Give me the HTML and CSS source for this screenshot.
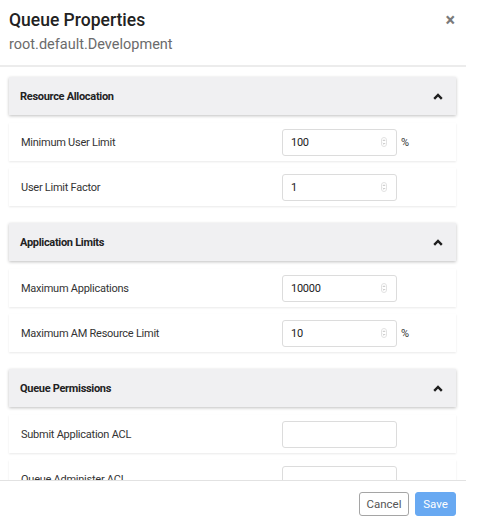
FILE: index.html
```html
<!DOCTYPE html>
<html>
<head>
<meta charset="utf-8">
<link rel="stylesheet" href="styles.css">
</head>
<body>
<div class="modal">
  <div class="modal-header">
    <div class="titles">
      <div class="title">Queue Properties</div>
      <div class="subtitle">root.default.Development</div>
    </div>
    <div class="close">&times;</div>
  </div>
  <div class="modal-body">
    <div class="section">
      <div class="section-head"><span>Resource Allocation</span><svg class="chev" width="10" height="7" viewBox="0 0 10 7"><path d="M1.2 5.8 L5 2 L8.8 5.8" fill="none" stroke="#1e1e1e" stroke-width="2.4"/></svg></div>
      <div class="row"><span class="label">Minimum User Limit</span><div class="input"><span>100</span><svg class="spin" width="6" height="10" viewBox="0 0 6 10"><rect x="0.5" y="0.5" width="5" height="9" rx="2.5" fill="none" stroke="#e2e2e2"/><path d="M1.8 4 L3 2.8 L4.2 4 M1.8 6 L3 7.2 L4.2 6" fill="none" stroke="#b5b5b5" stroke-width="0.8"/></svg></div><span class="unit">%</span></div>
      <div class="row"><span class="label">User Limit Factor</span><div class="input"><span>1</span><svg class="spin" width="6" height="10" viewBox="0 0 6 10"><rect x="0.5" y="0.5" width="5" height="9" rx="2.5" fill="none" stroke="#e2e2e2"/><path d="M1.8 4 L3 2.8 L4.2 4 M1.8 6 L3 7.2 L4.2 6" fill="none" stroke="#b5b5b5" stroke-width="0.8"/></svg></div></div>
    </div>
    <div class="section">
      <div class="section-head"><span>Application Limits</span><svg class="chev" width="10" height="7" viewBox="0 0 10 7"><path d="M1.2 5.8 L5 2 L8.8 5.8" fill="none" stroke="#1e1e1e" stroke-width="2.4"/></svg></div>
      <div class="row"><span class="label">Maximum Applications</span><div class="input"><span>10000</span><svg class="spin" width="6" height="10" viewBox="0 0 6 10"><rect x="0.5" y="0.5" width="5" height="9" rx="2.5" fill="none" stroke="#e2e2e2"/><path d="M1.8 4 L3 2.8 L4.2 4 M1.8 6 L3 7.2 L4.2 6" fill="none" stroke="#b5b5b5" stroke-width="0.8"/></svg></div></div>
      <div class="row"><span class="label">Maximum AM Resource Limit</span><div class="input"><span>10</span><svg class="spin" width="6" height="10" viewBox="0 0 6 10"><rect x="0.5" y="0.5" width="5" height="9" rx="2.5" fill="none" stroke="#e2e2e2"/><path d="M1.8 4 L3 2.8 L4.2 4 M1.8 6 L3 7.2 L4.2 6" fill="none" stroke="#b5b5b5" stroke-width="0.8"/></svg></div><span class="unit">%</span></div>
    </div>
    <div class="section">
      <div class="section-head"><span>Queue Permissions</span><svg class="chev" width="10" height="7" viewBox="0 0 10 7"><path d="M1.2 5.8 L5 2 L8.8 5.8" fill="none" stroke="#1e1e1e" stroke-width="2.4"/></svg></div>
      <div class="row"><span class="label">Submit Application ACL</span><div class="input"></div></div>
      <div class="row"><span class="label">Queue Administer ACL</span><div class="input"></div></div>
    </div>
  </div>
  <div class="modal-footer">
    <button class="btn cancel">Cancel</button>
    <button class="btn save">Save</button>
  </div>
</div>
</body>
</html>
```
FILE: styles.css
```css
html, body {
  margin: 0;
  padding: 0;
  background: #fff;
}
body {
  font-family: Roboto, "Liberation Sans", sans-serif;
  color: #333;
  width: 477px;
  height: 531px;
  overflow: hidden;
}
.modal {
  width: 466px;
  height: 531px;
  display: flex;
  flex-direction: column;
}
.modal-header {
  height: 67px;
  box-sizing: border-box;
  border-bottom: 2px solid #ececec;
  padding: 9px 11px 0 9px;
  display: flex;
  justify-content: space-between;
  align-items: flex-start;
  flex: none;
}
.title {
  font-size: 17.5px;
  line-height: 22px;
  font-weight: 500;
  color: #222;
}
.subtitle {
  margin-top: 5px;
  font-size: 14.5px;
  line-height: 18px;
  color: #6b6b6b;
}
.close {
  font-size: 18px;
  line-height: 18px;
  font-weight: bold;
  color: #7a7a7a;
  margin-top: 2px;
}
.modal-body {
  height: 413px;
  flex: none;
  overflow: hidden;
  padding: 10px 10px 0 9px;
  box-sizing: border-box;
}
.section {
  margin-bottom: 17px;
}
.section-head {
  height: 38px;
  background: #f0f0f2;
  box-shadow: 0 1px 3px rgba(0, 0, 0, 0.25);
  display: flex;
  align-items: center;
  justify-content: space-between;
  padding: 0 13px 0 11px;
  font-size: 11px;
  letter-spacing: -0.3px;
  font-weight: bold;
  color: #222;
  margin-bottom: 8px;
}
.row {
  height: 38px;
  background: #fff;
  box-shadow: 0 1px 2px rgba(0, 0, 0, 0.09);
  display: grid;
  grid-template-columns: 257px 115px auto;
  column-gap: 4px;
  align-items: center;
  padding-left: 12px;
  font-size: 11px;
  letter-spacing: -0.25px;
  margin-bottom: 7px;
}
.label {
  color: #333;
}
.input {
  height: 27px;
  box-sizing: border-box;
  border: 1px solid #dcdcdc;
  border-radius: 3px;
  display: flex;
  align-items: center;
  justify-content: space-between;
  padding: 0 9px 0 8px;
  color: #222;
}
.unit {
  font-size: 11px;
  color: #333;
}
.modal-footer {
  flex: 1;
  border-top: 1px solid #e2e2e2;
  display: flex;
  justify-content: flex-end;
  align-items: flex-start;
  padding: 11px 10px 0 0;
  gap: 6px;
}
.btn {
  height: 24px;
  font-family: Roboto, "Liberation Sans", sans-serif;
  font-size: 11.5px;
  border-radius: 3px;
  padding: 0;
}
.cancel {
  width: 50px;
  background: #fff;
  border: 1px solid #a5a5a5;
  color: #555;
}
.save {
  width: 41px;
  background: #68a9f2;
  border: 1px solid #68a9f2;
  color: #fff;
}
```
